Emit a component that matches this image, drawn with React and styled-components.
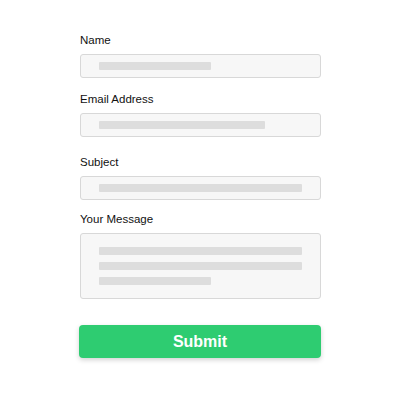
import React from "react";
import styled, { createGlobalStyle } from "styled-components";

const GlobalStyle = createGlobalStyle`
  body {
    margin: 0;
    background: #ffffff;
    font-family: "Liberation Sans", Arial, sans-serif;
  }
`;

const fields = [
  { label: "Name", bars: [55], top: 0 },
  { label: "Email Address", bars: [82], top: 14 },
  { label: "Subject", bars: [100], top: 18 },
];

export default function App() {
  return (
    <>
      <GlobalStyle />
      <Page>
        <Form>
          {fields.map((f) => (
            <Field key={f.label} $top={f.top}>
              <Label>{f.label}</Label>
              <InputBox>
                {f.bars.map((w, i) => (
                  <Bar key={i} $width={w} />
                ))}
              </InputBox>
            </Field>
          ))}
          <Field $top={12}>
            <Label>Your Message</Label>
            <TextBox>
              <Bar $width={100} />
              <Bar $width={100} />
              <Bar $width={55} />
            </TextBox>
          </Field>
          <SubmitButton>Submit</SubmitButton>
        </Form>
      </Page>
    </>
  );
}

const Page = styled.div`
  width: 400px;
  height: 400px;
  display: flex;
  justify-content: flex-start;
  padding: 33px 0px 0px 80px;
  box-sizing: border-box;
`;
const Form = styled.div`
  width: 241px;
  display: flex;
  flex-direction: column;
`;
const Field = styled.div`
  display: flex;
  flex-direction: column;
  gap: 7px;
  margin-top: ${(p) => p.$top}px;
`;
const Label = styled.div`
  font-size: 11.5px;
  line-height: 14px;
  color: #111111;
`;
const InputBox = styled.div`
  height: 24px;
  box-sizing: border-box;
  background-color: #f7f7f7;
  border: 1px solid #d8d8d8;
  border-radius: 3px;
  display: flex;
  align-items: center;
  padding: 0px 18px;
`;
const TextBox = styled.div`
  height: 66px;
  box-sizing: border-box;
  background-color: #f7f7f7;
  border: 1px solid #d8d8d8;
  border-radius: 3px;
  display: flex;
  flex-direction: column;
  justify-content: center;
  gap: 7px;
  padding: 0px 18px;
`;
const Bar = styled.div`
  width: ${(p) => p.$width}%;
  height: 8px;
  background-color: #dddddd;
  border-radius: 1px;
`;
const SubmitButton = styled.div`
  margin-top: 26px;
  margin-left: -1px;
  height: 33px;
  background-color: #2ecc71;
  border-radius: 4px;
  box-shadow: 0px 2px 5px rgba(0, 0, 0, 0.18);
  display: flex;
  align-items: center;
  justify-content: center;
  color: #ffffff;
  font-size: 16px;
  font-weight: 700;
`;
